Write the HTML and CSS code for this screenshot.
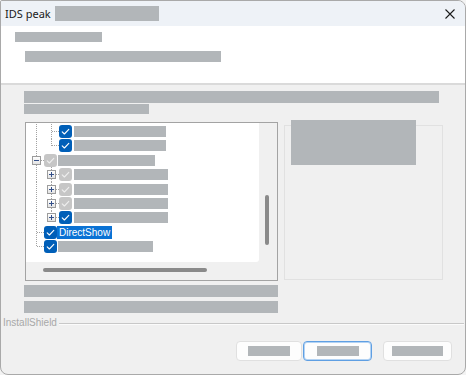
FILE: index.html
```html
<!DOCTYPE html>
<html lang="en">
<head>
<meta charset="utf-8">
<title>IDS peak Setup</title>
<link rel="stylesheet" href="styles.css">
</head>
<body>
<div class="window">
  <div class="titlebar">
    <span class="title">IDS peak</span>
    <span class="redact title-redact"></span>
    <svg class="close" width="10" height="10" viewBox="0 0 10 10"><path d="M0.5 0.5 L9.5 9.5 M9.5 0.5 L0.5 9.5" stroke="#1b1b1b" stroke-width="1.1" fill="none"/></svg>
  </div>
  <div class="header">
    <div class="redact h1"></div>
    <div class="redact h2"></div>
  </div>
  <div class="content">
    <div class="redact b3"></div>
    <div class="redact b4"></div>
    <div class="split">
      <div class="tree">
        <div class="tree-view">
          <div class="row">
            <span class="cell pipe"></span><span class="cell tee"></span>
            <span class="cb on"><svg viewBox="0 0 13 13"><path d="M3.2 6.8 L5.4 9 L9.8 4.4"/></svg></span>
            <span class="redact lbl" style="width:92px"></span>
          </div>
          <div class="row">
            <span class="cell pipe"></span><span class="cell elbow"></span>
            <span class="cb on"><svg viewBox="0 0 13 13"><path d="M3.2 6.8 L5.4 9 L9.8 4.4"/></svg></span>
            <span class="redact lbl" style="width:92px"></span>
          </div>
          <div class="row">
            <span class="cell tee"><span class="exp minus"></span></span>
            <span class="cb dim"><svg viewBox="0 0 13 13"><path d="M3.2 6.8 L5.4 9 L9.8 4.4"/></svg></span>
            <span class="redact lbl root" style="width:97px"></span>
          </div>
          <div class="row">
            <span class="cell pipe"></span><span class="cell tee"><span class="exp plus"></span></span>
            <span class="cb dim"><svg viewBox="0 0 13 13"><path d="M3.2 6.8 L5.4 9 L9.8 4.4"/></svg></span>
            <span class="redact lbl" style="width:94px"></span>
          </div>
          <div class="row">
            <span class="cell pipe"></span><span class="cell tee"><span class="exp plus"></span></span>
            <span class="cb dim"><svg viewBox="0 0 13 13"><path d="M3.2 6.8 L5.4 9 L9.8 4.4"/></svg></span>
            <span class="redact lbl" style="width:94px"></span>
          </div>
          <div class="row">
            <span class="cell pipe"></span><span class="cell tee"><span class="exp plus"></span></span>
            <span class="cb dim"><svg viewBox="0 0 13 13"><path d="M3.2 6.8 L5.4 9 L9.8 4.4"/></svg></span>
            <span class="redact lbl" style="width:94px"></span>
          </div>
          <div class="row">
            <span class="cell pipe"></span><span class="cell elbow"><span class="exp plus"></span></span>
            <span class="cb on"><svg viewBox="0 0 13 13"><path d="M3.2 6.8 L5.4 9 L9.8 4.4"/></svg></span>
            <span class="redact lbl" style="width:94px"></span>
          </div>
          <div class="row">
            <span class="cell tee"></span>
            <span class="cb on"><svg viewBox="0 0 13 13"><path d="M3.2 6.8 L5.4 9 L9.8 4.4"/></svg></span>
            <span class="selected">DirectShow</span>
          </div>
          <div class="row">
            <span class="cell elbow"></span>
            <span class="cb on"><svg viewBox="0 0 13 13"><path d="M3.2 6.8 L5.4 9 L9.8 4.4"/></svg></span>
            <span class="redact lbl root" style="width:95px"></span>
          </div>
        </div>
        <div class="vscroll"><div class="vthumb"></div></div>
        <div class="hscroll"><div class="hthumb"></div></div>
        <div class="corner"></div>
      </div>
      <div class="info">
        <div class="redact info-redact"></div>
      </div>
    </div>
    <div class="redact b5"></div>
    <div class="redact b6"></div>
    <div class="brand">
      <span class="brand-text">InstallShield</span>
      <span class="etch"></span>
    </div>
    <div class="actions">
      <button class="btn b-back"><span class="redact btn-lbl" style="width:42px"></span></button>
      <button class="btn b-next focus"><span class="redact btn-lbl" style="width:42px"></span></button>
      <button class="btn b-cancel"><span class="redact btn-lbl" style="width:51px"></span></button>
    </div>
  </div>
</div>
</body>
</html>
```

FILE: styles.css
```css
html, body {
  margin: 0;
  padding: 0;
  background: #f3f3f3;
}

body {
  font-family: "Liberation Sans", Arial, sans-serif;
  --v: repeating-linear-gradient(to bottom, #a3a3a3 0 1px, transparent 1px 2px);
  --h: repeating-linear-gradient(to right, #a3a3a3 0 1px, transparent 1px 2px);
}

.window {
  width: 466px;
  height: 375px;
  box-sizing: border-box;
  border: 1px solid #a9a9a9;
  border-radius: 2px 8px 8px 8px;
  overflow: hidden;
  background: #f0f0f0;
  display: flex;
  flex-direction: column;
}

.redact {
  background: #b2b6b9;
  display: block;
}

/* title bar */
.titlebar {
  height: 25px;
  flex: none;
  background: #eef2f7;
  display: flex;
  align-items: center;
  padding-left: 4px;
}

.title {
  font-family: "Noto Sans", "Liberation Sans", sans-serif;
  font-size: 11px;
  color: #1a1a1a;
  line-height: 1;
}

.title-redact {
  width: 104px;
  height: 15px;
  margin-left: 4px;
}

.close {
  margin-left: auto;
  margin-right: 10px;
  display: block;
}

/* header */
.header {
  flex: none;
  height: 57px;
  background: #ffffff;
  border-bottom: 2px solid #dadada;
  display: flex;
  flex-direction: column;
  align-items: flex-start;
}

.h1 {
  width: 87px;
  height: 10px;
  margin: 6px 0 0 14px;
}

.h2 {
  width: 196px;
  height: 11px;
  margin: 9px 0 0 24px;
}

/* body */
.content {
  flex: 1;
  display: flex;
  flex-direction: column;
  align-items: flex-start;
}

.b3 {
  width: 415px;
  height: 12px;
  margin: 6px 0 0 23px;
}

.b4 {
  width: 125px;
  height: 10px;
  margin: 1px 0 0 23px;
}

.split {
  display: flex;
  align-items: flex-start;
  margin: 8px 0 0 24px;
}

.tree {
  width: 253px;
  height: 159px;
  box-sizing: border-box;
  border: 1px solid #a3a3a3;
  display: grid;
  grid-template-columns: 1fr 18px;
  grid-template-rows: 1fr 18px;
  background: #f0f0f0;
}

.tree-view {
  background: #ffffff;
  border-bottom-right-radius: 3px;
  padding: 1.3px 0 0 3px;
  overflow: hidden;
}

.row {
  height: 14.4px;
  display: flex;
  align-items: center;
}

.cell {
  width: 15px;
  height: 100%;
  flex: none;
  display: flex;
  align-items: center;
  justify-content: center;
  background-repeat: no-repeat;
}

.pipe {
  background-image: var(--v);
  background-size: 1px 100%;
  background-position: 7px 0;
}

.tee {
  background-image: var(--v), var(--h);
  background-size: 1px 100%, 7px 1px;
  background-position: 7px 0, 8px 50%;
}

.elbow {
  background-image: var(--v), var(--h);
  background-size: 1px 50%, 7px 1px;
  background-position: 7px 0, 8px 50%;
}

.exp {
  width: 9px;
  height: 9px;
  box-sizing: border-box;
  border: 1px solid #9c9c9c;
  background: linear-gradient(#ffffff, #e3e3e3);
  background-repeat: no-repeat;
}

.minus {
  background-image: linear-gradient(#34508a, #34508a), linear-gradient(#ffffff, #e3e3e3);
  background-size: 5px 1px, 100% 100%;
  background-position: 1px 3px, 0 0;
}

.plus {
  background-image: linear-gradient(#34508a, #34508a), linear-gradient(#34508a, #34508a), linear-gradient(#ffffff, #e3e3e3);
  background-size: 5px 1px, 1px 5px, 100% 100%;
  background-position: 1px 3px, 3px 1px, 0 0;
}

.cb {
  width: 13px;
  height: 13px;
  flex: none;
  border-radius: 3px;
  display: block;
}

.cb svg {
  display: block;
  width: 13px;
  height: 13px;
}

.cb path {
  fill: none;
  stroke-width: 1.1;
  stroke-linecap: round;
  stroke-linejoin: round;
}

.cb.on {
  background: #005fb8;
}

.cb.on path {
  stroke: #ffffff;
}

.cb.dim {
  background: #c6c6c6;
}

.cb.dim path {
  stroke: #eeeeee;
}

.lbl {
  height: 11px;
  margin-left: 2px;
}

.lbl.root {
  margin-left: 1px;
}

.selected {
  background: #0a72d4;
  color: #ffffff;
  font-size: 10px;
  line-height: 13px;
  height: 13px;
  padding: 0 2px;
  white-space: nowrap;
}

.vscroll {
  padding-left: 6px;
}

.vthumb {
  width: 4px;
  height: 50px;
  margin-top: 72px;
  background: #8a8a8a;
  border-radius: 2px;
}

.hscroll {
  padding-top: 6px;
}

.hthumb {
  width: 164px;
  height: 4px;
  margin-left: 17px;
  background: #8a8a8a;
  border-radius: 2px;
}

.info {
  position: relative;
  width: 159px;
  height: 155px;
  box-sizing: border-box;
  border: 1px solid #e1e1e1;
  margin: 3px 0 0 6px;
}

.info-redact {
  position: absolute;
  left: 6px;
  top: -6px;
  width: 125px;
  height: 45px;
}

.b5 {
  width: 254px;
  height: 12px;
  margin: 4px 0 0 23px;
}

.b6 {
  width: 254px;
  height: 12px;
  margin: 4px 0 0 23px;
}

.brand {
  align-self: stretch;
  display: flex;
  align-items: center;
  height: 12px;
  margin-top: 4px;
  padding-left: 2px;
}

.brand-text {
  font-size: 10px;
  line-height: 12px;
  color: #a8a8a8;
}

.etch {
  flex: 1;
  height: 0;
  margin: 1px 1px 0 2px;
  border-top: 1px solid #c8c8c8;
  border-bottom: 1px solid #fbfbfb;
}

.actions {
  align-self: stretch;
  display: flex;
  justify-content: flex-end;
  margin-top: 12px;
  padding-right: 13px;
}

.btn {
  height: 20px;
  box-sizing: border-box;
  border: 1px solid #e0e0e0;
  border-radius: 4px;
  background: #fdfdfd;
  padding: 0;
  margin: 0;
  display: flex;
  align-items: center;
  justify-content: center;
  font: inherit;
}

.b-back {
  width: 66px;
}

.b-next {
  width: 69px;
  margin-left: 1px;
}

.b-cancel {
  width: 69px;
  margin-left: 11px;
}

.btn.focus {
  border-color: #5f9fe3;
  box-shadow: inset 0 0 0 1px #b4d3f3;
}

.btn-lbl {
  height: 10px;
}
```
